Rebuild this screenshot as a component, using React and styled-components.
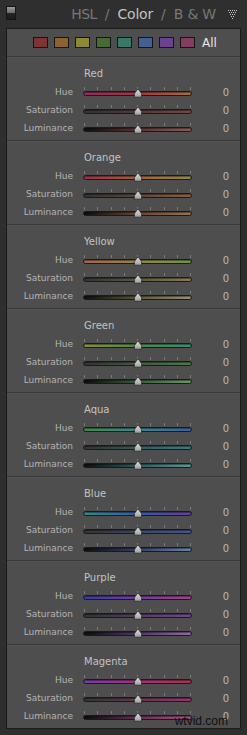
import React from "react"
import styled, { createGlobalStyle } from "styled-components"

const GlobalStyle = createGlobalStyle`
  html, body {
    margin: 0;
    padding: 0;
    background: #2f2f2f;
  }
  * {
    box-sizing: border-box;
  }
`

const Page = styled.div`
  position: relative;
  width: 247px;
  height: 735px;
  background: #2f2f2f;
  font-family: "DejaVu Sans", "Liberation Sans", sans-serif;
  overflow: hidden;
`

const Header = styled.div`
  height: 28px;
  display: flex;
  align-items: center;
  padding: 0 9px 0 6px;
`

const Toggle = styled.div`
  width: 10px;
  height: 14px;
  border: 1px solid #151515;
  background: linear-gradient(#9a9a9a 0%, #6a6a6a 48%, #262626 52%, #1c1c1c 100%);
  margin-top: -2px;
`

const Tabs = styled.div`
  margin-left: auto;
  display: flex;
  align-items: center;
  gap: 8px;
  font-size: 14px;
  color: #787878;
`

const Tab = styled.span`
  color: ${(p) => (p.active ? "#c2c2c2" : "#787878")};
  letter-spacing: ${(p) => (p.tight ? "-0.6px" : "-0.2px")};
`

const Panel = styled.div`
  margin: 0 6px;
  border: 1px solid #1b1b1b;
  background: #4e4e4e;
`

const SwatchBar = styled.div`
  height: 27px;
  display: flex;
  align-items: center;
  padding-left: 26px;
  gap: 6px;
`

const Swatch = styled.div`
  width: 15px;
  height: 11px;
  border: 1px solid #151515;
  background: ${(p) => p.color};
`

const AllLabel = styled.span`
  margin-left: 1px;
  font-size: 12px;
  color: #e6e6e6;
`

const Section = styled.div`
  height: 84px;
  border-top: 1px solid #383838;
  box-shadow: inset 0 1px 0 #555;
  padding-top: 10px;
`

const Title = styled.div`
  padding-left: 77px;
  height: 14px;
  line-height: 14px;
  margin-bottom: 2px;
  font-size: 10px;
  color: #c2c2c2;
`

const Row = styled.div`
  display: grid;
  grid-template-columns: 66px 109px 27px;
  column-gap: 10px;
  align-items: center;
  height: 18px;
`

const Label = styled.span`
  text-align: right;
  font-size: 9px;
  color: #b4b4b4;
`

const Value = styled.span`
  text-align: right;
  font-size: 10px;
  color: #b8b8b8;
`

const Slider = styled.div`
  position: relative;
  height: 12px;
`

const Track = styled.div`
  position: absolute;
  left: 0;
  right: 0;
  bottom: 2px;
  height: 5px;
  border-radius: 3px;
  border: 1px solid #1a1a1a;
  background: ${(p) => p.gradient};
  box-shadow: inset 0 1px 0 rgba(0, 0, 0, 0.35);
`

const Ticks = styled.div`
  position: absolute;
  left: 1px;
  right: 1px;
  top: 1px;
  height: 3px;
  display: flex;
  justify-content: space-between;
`

const Tick = styled.span`
  width: 1px;
  height: 3px;
  background: #7a7a7a;
`

const Thumb = styled.svg`
  position: absolute;
  left: 50%;
  bottom: 0;
  margin-left: -5px;
`

const Watermark = styled.div`
  position: absolute;
  right: 19px;
  bottom: 7px;
  font-family: "Liberation Sans", sans-serif;
  font-size: 12px;
  color: #101010;
`

const colors = [
  {
    name: "Red",
    swatch: "#7e3434",
    hue: ["#942a62", "#a0343e", "#a86a3a"],
    sat: ["#333333", "#4e3a3a", "#7a4444"],
    lum: ["#0e0e0e", "#5a3232", "#8e5858"],
  },
  {
    name: "Orange",
    swatch: "#8e622e",
    hue: ["#9c2e4a", "#a05e3a", "#8e8a46"],
    sat: ["#333333", "#5a4638", "#8a5e40"],
    lum: ["#0e0e0e", "#664430", "#987050"],
  },
  {
    name: "Yellow",
    swatch: "#8e8a34",
    hue: ["#a66454", "#948642", "#6e9644"],
    sat: ["#333333", "#5a5640", "#8a7a4e"],
    lum: ["#0e0e0e", "#5e5636", "#9a8e6a"],
  },
  {
    name: "Green",
    swatch: "#466c36",
    hue: ["#8a8a40", "#4a8a42", "#3e8a70"],
    sat: ["#333333", "#40583e", "#4a7a48"],
    lum: ["#0e0e0e", "#385a36", "#669866"],
  },
  {
    name: "Aqua",
    swatch: "#387a6a",
    hue: ["#3e8a4a", "#32888a", "#3464a4"],
    sat: ["#333333", "#385858", "#387c7c"],
    lum: ["#0e0e0e", "#2c5a5a", "#5a9898"],
  },
  {
    name: "Blue",
    swatch: "#445e96",
    hue: ["#32888a", "#3458a4", "#643e98"],
    sat: ["#333333", "#3c4660", "#40588e"],
    lum: ["#0e0e0e", "#323f68", "#6882ae"],
  },
  {
    name: "Purple",
    swatch: "#6c4290",
    hue: ["#3c3ca4", "#703e98", "#a43e8c"],
    sat: ["#333333", "#503e60", "#72468e"],
    lum: ["#0e0e0e", "#4e3668", "#9268a8"],
  },
  {
    name: "Magenta",
    swatch: "#863c5e",
    hue: ["#723ea4", "#a42e80", "#a43648"],
    sat: ["#333333", "#60384f", "#983270"],
    lum: ["#0e0e0e", "#682c52", "#aa4e88"],
  },
]

const grad = (stops) => `linear-gradient(to right, ${stops.join(", ")})`

const TriangleIcon = () => (
  <svg width="10" height="9" viewBox="0 0 10 9">
    {[0, 1, 2, 3, 4].map((row) =>
      Array.from({ length: 5 - row }).map((_, i) => (
        <rect
          key={`${row}-${i}`}
          x={row + i * 2}
          y={row * 2}
          width="1"
          height="1"
          fill="#c8c8c8"
        />
      ))
    )}
  </svg>
)

const SliderRow = ({ label, stops }) => (
  <Row>
    <Label>{label}</Label>
    <Slider>
      <Ticks>
        {Array.from({ length: 9 }).map((_, i) => (
          <Tick key={i} />
        ))}
      </Ticks>
      <Track gradient={grad(stops)} />
      <Thumb width="10" height="10" viewBox="0 0 10 10">
        <defs>
          <linearGradient id="thumbFill" x1="0" y1="0" x2="0" y2="1">
            <stop offset="0" stopColor="#e4e4e4" />
            <stop offset="1" stopColor="#9c9c9c" />
          </linearGradient>
        </defs>
        <path
          d="M5 0.8 L8.6 5.6 L8.6 9.2 L1.4 9.2 L1.4 5.6 Z"
          fill="url(#thumbFill)"
          stroke="#2a2a2a"
          strokeWidth="0.8"
        />
      </Thumb>
    </Slider>
    <Value>0</Value>
  </Row>
)

const App = () => (
  <Page>
    <GlobalStyle />
    <Header>
      <Toggle />
      <Tabs>
        <Tab tight>HSL</Tab>
        <span>/</span>
        <Tab active>Color</Tab>
        <span>/</span>
        <Tab>B &amp; W</Tab>
        <span style={{ marginLeft: 4, display: "flex" }}>
          <TriangleIcon />
        </span>
      </Tabs>
    </Header>
    <Panel>
      <SwatchBar>
        {colors.map((c) => (
          <Swatch key={c.name} color={c.swatch} />
        ))}
        <AllLabel>All</AllLabel>
      </SwatchBar>
      {colors.map((c) => (
        <Section key={c.name}>
          <Title>{c.name}</Title>
          <SliderRow label="Hue" stops={c.hue} />
          <SliderRow label="Saturation" stops={c.sat} />
          <SliderRow label="Luminance" stops={c.lum} />
        </Section>
      ))}
    </Panel>
    <Watermark>wtvid.com</Watermark>
  </Page>
)

export default App
